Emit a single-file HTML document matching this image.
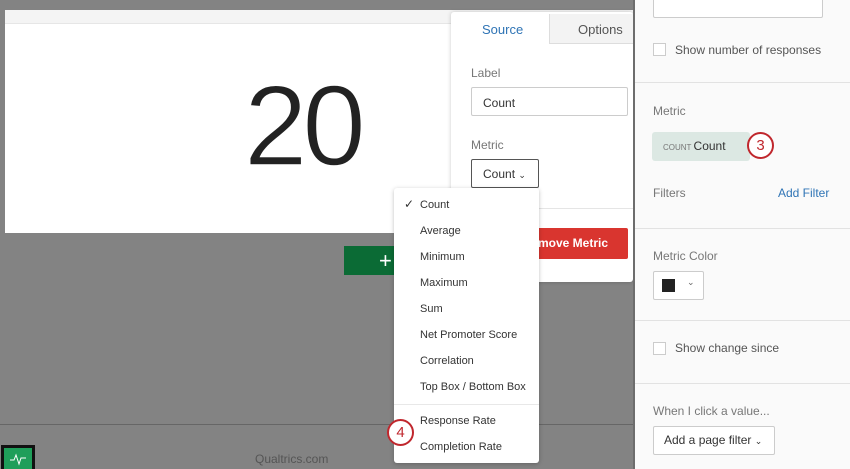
<!DOCTYPE html>
<html><head><style>
*{box-sizing:border-box;margin:0;padding:0}
body{width:850px;height:469px;overflow:hidden;background:#838383;font-family:"Liberation Sans",sans-serif;position:relative}
.a{position:absolute}
.t{font-size:12px;color:#333}
.g{color:#777}
</style></head><body>
<div class="a" style="left:5px;top:10px;width:628px;height:223px;background:#fff"></div>
<div class="a" style="left:5px;top:10px;width:628px;height:14px;background:#f4f4f4;border-bottom:1px solid #e6e6e6"></div>
<div class="a" style="left:244px;top:70px;font-size:114px;color:#222;line-height:1;letter-spacing:-5px;-webkit-text-stroke:1.5px #fff">20</div>
<div class="a" style="left:344px;top:246px;width:60px;height:29px;background:#0b6b35;color:#fff;font-size:22px;padding-left:35px;line-height:29px">+</div>
<div class="a" style="left:0;top:424px;width:633px;height:1px;background:#666"></div>
<div class="a" style="left:1px;top:445px;width:34px;height:24px;background:#111"></div>
<div class="a" style="left:4px;top:448px;width:28px;height:21px;background:#1f9e5a"></div>
<svg class="a" style="left:9px;top:451px" width="18" height="16"><path d="M1 9h4l2-5 3 9 2-6h5" stroke="#fff" fill="none" stroke-width="1"/></svg>
<div class="a t" style="left:255px;top:452px;color:#555">Qualtrics.com</div>

<div class="a" style="left:451px;top:12px;width:182px;height:270px;background:#fff;border-radius:3px;box-shadow:0 0 4px rgba(0,0,0,.2)"></div>
<div class="a" style="left:549px;top:14px;width:84px;height:30px;background:#f3f3f3;border-left:1px solid #ddd;border-bottom:1px solid #ddd"></div>
<div class="a t" style="left:482px;top:22px;color:#2f74b5;font-size:13px">Source</div>
<div class="a t" style="left:578px;top:22px;color:#555;font-size:13px">Options</div>
<div class="a t g" style="left:471px;top:66px">Label</div>
<div class="a" style="left:471px;top:87px;width:157px;height:29px;border:1px solid #ccc;border-radius:2px"></div>
<div class="a t" style="left:483px;top:96px">Count</div>
<div class="a t g" style="left:471px;top:138px">Metric</div>
<div class="a" style="left:471px;top:159px;width:68px;height:29px;border:1px solid #555;border-radius:2px"></div>
<div class="a t" style="left:483px;top:167px">Count <span style="font-size:9px">&#8964;</span></div>
<div class="a" style="left:451px;top:208px;width:182px;height:1px;background:#e5e5e5"></div>
<div class="a" style="left:500px;top:228px;width:128px;height:31px;background:#d9352f;border-radius:2px;color:#fff;font-weight:bold;font-size:12px;line-height:31px;padding-left:38px">move Metric</div>

<div class="a" style="left:394px;top:188px;width:145px;height:275px;background:#fff;border-radius:3px;box-shadow:0 1px 4px rgba(0,0,0,.25)"></div>
<div class="a" style="left:394px;top:404px;width:145px;height:1px;background:#e8e8e8"></div>
<div class="a" style="left:404px;top:197px;font-size:12px;color:#333">&#10003;</div>
<div class="a" style="left:420px;top:192px;font-size:11px;color:#333;line-height:26px">Count<br>Average<br>Minimum<br>Maximum<br>Sum<br>Net Promoter Score<br>Correlation<br>Top Box / Bottom Box</div>
<div class="a" style="left:420px;top:408px;font-size:11px;color:#333;line-height:26px">Response Rate<br>Completion Rate</div>
<div class="a" style="left:387px;top:419px;width:27px;height:27px;border:2px solid #c0272d;border-radius:50%;background:#fff;color:#c0272d;text-align:center;font-size:15px;line-height:23px">4</div>

<div class="a" style="left:633px;top:0;width:217px;height:469px;background:#fafafa;border-left:2px solid #6d6d6d"></div>
<div class="a" style="left:653px;top:-4px;width:170px;height:22px;border:1px solid #ccc;background:#fff;border-radius:2px"></div>
<div class="a" style="left:653px;top:43px;width:13px;height:13px;border:1px solid #ccc;background:#fff"></div>
<div class="a t" style="left:675px;top:43px;color:#555">Show number of responses</div>
<div class="a" style="left:635px;top:82px;width:215px;height:1px;background:#e2e2e2"></div>
<div class="a t g" style="left:653px;top:104px">Metric</div>
<div class="a" style="left:652px;top:132px;width:98px;height:29px;background:#dce8e3;border-radius:3px"></div>
<div class="a" style="left:663px;top:139px;color:#777;font-size:8px;line-height:14px">COUNT <span style="font-size:12px;color:#333">Count</span></div>
<div class="a" style="left:747px;top:132px;width:27px;height:27px;border:2px solid #c0272d;border-radius:50%;background:#fff;color:#c0272d;text-align:center;font-size:15px;line-height:23px">3</div>
<div class="a t g" style="left:653px;top:186px">Filters</div>
<div class="a t" style="left:778px;top:186px;color:#2f74b5">Add Filter</div>
<div class="a" style="left:635px;top:228px;width:215px;height:1px;background:#e2e2e2"></div>
<div class="a t g" style="left:653px;top:249px">Metric Color</div>
<div class="a" style="left:653px;top:271px;width:51px;height:29px;border:1px solid #ccc;background:#fff;border-radius:2px"></div>
<div class="a" style="left:662px;top:279px;width:13px;height:13px;background:#222"></div>
<div class="a" style="left:687px;top:277px;font-size:9px;color:#666">&#8964;</div>
<div class="a" style="left:635px;top:320px;width:215px;height:1px;background:#e2e2e2"></div>
<div class="a" style="left:653px;top:342px;width:13px;height:13px;border:1px solid #ccc;background:#fff"></div>
<div class="a t" style="left:675px;top:341px;color:#555">Show change since</div>
<div class="a" style="left:635px;top:383px;width:215px;height:1px;background:#e2e2e2"></div>
<div class="a t g" style="left:653px;top:404px">When I click a value...</div>
<div class="a" style="left:653px;top:426px;width:122px;height:29px;border:1px solid #ccc;background:#fff;border-radius:2px"></div>
<div class="a t" style="left:664px;top:433px">Add a page filter <span style="font-size:9px">&#8964;</span></div>
</body></html>
